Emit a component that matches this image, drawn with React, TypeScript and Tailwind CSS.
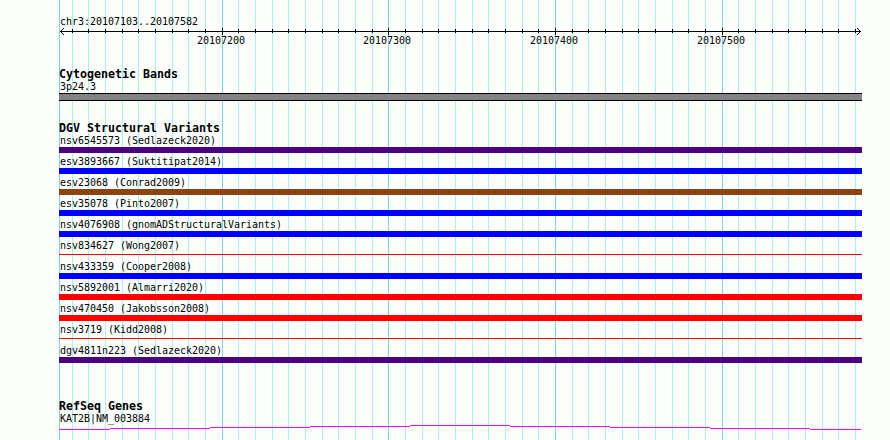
type Variant = {
  id: string;
  study: string;
  color: string;
  thin?: boolean;
};

const variants: Variant[] = [
  { id: "nsv6545573", study: "Sedlazeck2020", color: "bg-[#4b0082]" },
  { id: "esv3893667", study: "Suktitipat2014", color: "bg-[#0000ff]" },
  { id: "esv23068", study: "Conrad2009", color: "bg-[#8b4513]" },
  { id: "esv35078", study: "Pinto2007", color: "bg-[#0000ff]" },
  { id: "nsv4076908", study: "gnomADStructuralVariants", color: "bg-[#0000ff]" },
  { id: "nsv834627", study: "Wong2007", color: "bg-[#ff0000]", thin: true },
  { id: "nsv433359", study: "Cooper2008", color: "bg-[#0000ff]" },
  { id: "nsv5892001", study: "Almarri2020", color: "bg-[#ff0000]" },
  { id: "nsv470450", study: "Jakobsson2008", color: "bg-[#ff0000]" },
  { id: "nsv3719", study: "Kidd2008", color: "bg-[#ff0000]", thin: true },
  { id: "dgv4811n223", study: "Sedlazeck2020", color: "bg-[#4b0082]" },
];

const majorLabels = ["20107200", "20107300", "20107400", "20107500"];

// one tick every 10 bp, relative to the left edge of the track area
const ticks = Array.from({ length: 48 }, (_, i) => ({
  x: Math.floor(13 + (i * 50) / 3 + 0.001),
  major: i % 10 === 9,
}));

export default function App() {
  return (
    <main className="relative h-[440px] w-[890px] overflow-hidden bg-[#fcfefc] pl-[59px] font-['DejaVu_Sans_Mono','Liberation_Mono',monospace] text-black">
      <Gridlines />

      <div className="relative flex w-[803px] flex-col pt-[15px]">
        <Label>chr3:20107103..20107582</Label>
        <Ruler />

        <section className="mt-[22px]">
          <Heading>Cytogenetic Bands</Heading>
          <Label>3p24.3</Label>
          <div className="mt-px h-2 border-y border-black bg-[#848284]" />
        </section>

        <section className="mt-[21px]">
          <Heading>DGV Structural Variants</Heading>
          {variants.map((variant) => (
            <div key={variant.id} className="flex h-[21px] flex-col">
              <Label>
                {variant.id} ({variant.study})
              </Label>
              <div className="mt-px flex h-1.5 flex-col">
                <div className={`${variant.thin ? "mt-0.5 h-px" : "h-1.5"} ${variant.color}`} />
              </div>
            </div>
          ))}
        </section>

        <section className="mt-[35px]">
          <Heading>RefSeq Genes</Heading>
          <Label>KAT2B|NM_003884</Label>
          <GeneLine />
        </section>
      </div>
    </main>
  );
}

function Label({ children }: { children: React.ReactNode }) {
  return <p className="h-3 pl-px text-[10px] leading-[14px] tracking-[-0.02px] whitespace-pre">{children}</p>;
}

function Heading({ children }: { children: React.ReactNode }) {
  return <h2 className="h-3 text-[11.63px] leading-3 font-bold whitespace-pre">{children}</h2>;
}

function Gridlines() {
  return (
    <svg className="absolute top-0 left-[59px]" width="803" height="440" shapeRendering="crispEdges">
      <rect x="0" y="0" width="1" height="440" fill="#87ceeb" />
      {ticks.map((tick) => (
        <rect key={tick.x} x={tick.x} y="0" width="1" height="440" fill={tick.major ? "#87ceeb" : "#afeeee"} />
      ))}
    </svg>
  );
}

function Ruler() {
  return (
    <div className="h-[19px]">
      <svg className="block h-[7px] overflow-visible" width="803" height="7" shapeRendering="crispEdges">
        <rect x="1" y="4" width="801" height="1" />
        {ticks.map((tick) => (
          <rect key={tick.x} x={tick.x} y={tick.major ? 1 : 2} width="1" height={tick.major ? 7 : 4} />
        ))}
        <path d="M2 3h1v1h-1zM3 2h1v1h-1zM4 1h1v1h-1zM2 5h1v1h-1zM3 6h1v1h-1zM4 7h1v1h-1z" />
        <path d="M800 3h1v1h-1zM799 2h1v1h-1zM798 1h1v1h-1zM800 5h1v1h-1zM799 6h1v1h-1zM798 7h1v1h-1z" />
      </svg>
      <div className="grid grid-cols-[166px_167px_167px_167px] pl-[137px]">
        {majorLabels.map((label) => (
          <Label key={label}>{label}</Label>
        ))}
      </div>
    </div>
  );
}

function GeneLine() {
  return (
    <svg className="mt-px block overflow-visible" width="803" height="8" shapeRendering="crispEdges">
      <g fill="#ff00ff">
        <rect x="0" y="4" width="51" height="1" />
        <rect x="51" y="3" width="100" height="1" />
        <rect x="151" y="2" width="100" height="1" />
        <rect x="251" y="1" width="100" height="1" />
        <rect x="351" y="0" width="100" height="1" />
        <rect x="451" y="1" width="100" height="1" />
        <rect x="551" y="2" width="100" height="1" />
        <rect x="651" y="3" width="100" height="1" />
        <rect x="751" y="4" width="51" height="1" />
      </g>
    </svg>
  );
}
